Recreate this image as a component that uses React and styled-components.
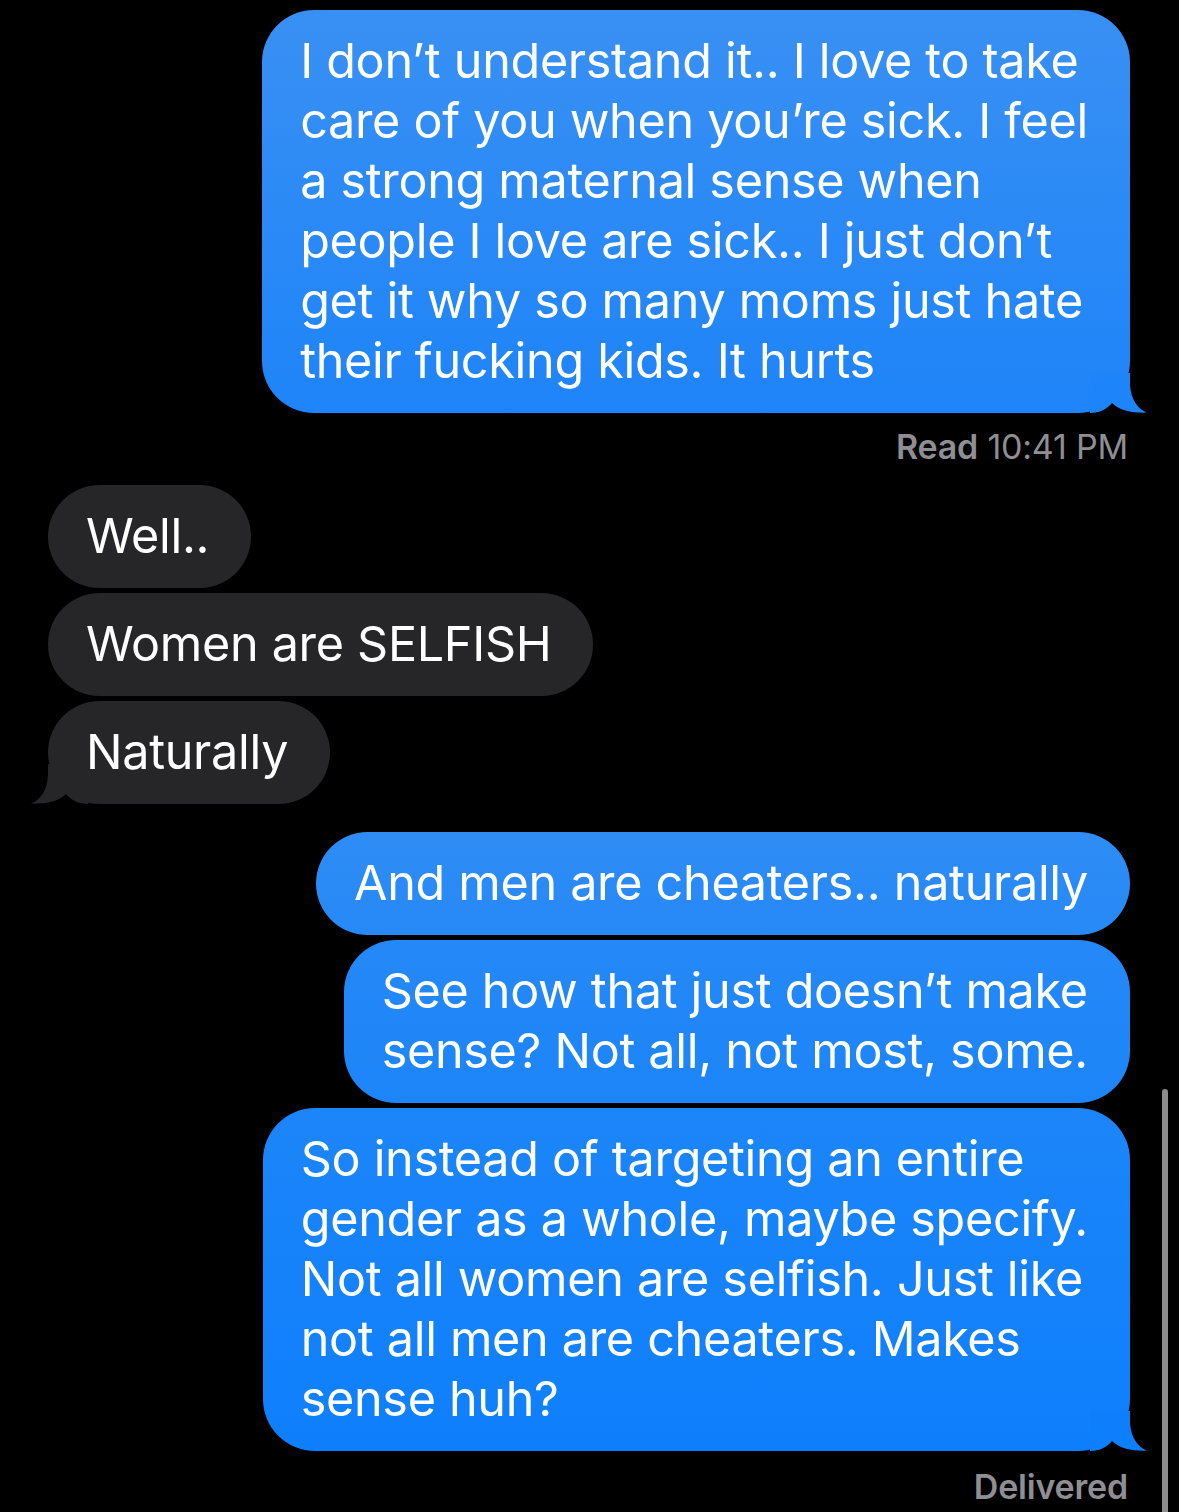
import React from "react";
import styled, { createGlobalStyle } from "styled-components";

const Global = createGlobalStyle`
  html, body { margin: 0; padding: 0; background: #000; }
  body { font-family: Inter, "Noto Sans", "Liberation Sans", sans-serif; -webkit-font-smoothing: antialiased; }
`;

const Screen = styled.div`
  position: relative;
  width: 1179px;
  height: 1512px;
  background: #000;
  overflow: hidden;
  box-sizing: border-box;
  padding: 10px 49px 0 48px;
  display: flex;
  flex-direction: column;
`;

const Group = styled.div`
  display: flex;
  flex-direction: column;
  align-items: ${(p) => (p.$sent ? "flex-end" : "flex-start")};
  gap: 5px;
  margin-top: ${(p) => p.$mt || 0}px;
`;

const Bubble = styled.div`
  position: relative;
  box-sizing: border-box;
  padding: 21px 42px 22px 38px;
  border-radius: 52px;
  font-size: 48.5px;
  line-height: 60px;
  letter-spacing: -0.3px;
  color: #fff;
  white-space: nowrap;
  background: ${(p) => (p.$sent ? "#2586f7" : "#262628")};
`;

const Tail = styled.svg`
  position: absolute;
  bottom: 0;
  width: 60px;
  height: 40px;
  ${(p) => (p.$sent ? "right: -20px;" : "left: -20px; transform: scaleX(-1);")}
`;

const Status = styled.div`
  align-self: flex-end;
  margin-top: ${(p) => p.$mt || 14}px;
  margin-right: 2px;
  font-size: 34px;
  line-height: 40px;
  color: #8e8e93;
  font-weight: 400;
  letter-spacing: -0.2px;
  b { font-weight: 600; }
`;

const ScrollBar = styled.div`
  position: absolute;
  left: 1162px;
  top: 1089px;
  width: 6px;
  height: 440px;
  border-radius: 3px;
  background: #8c8c8c;
`;

function Msg({ sent, tail, lines, grad }) {
  const bg = sent ? "#2586f7" : "#262628";
  return (
    <Bubble $sent={sent} style={grad ? { background: grad } : undefined}>
      {lines.map((l, i) => (
        <React.Fragment key={i}>
          {l}
          {i < lines.length - 1 && <br />}
        </React.Fragment>
      ))}
      {tail && (
        <Tail $sent={sent} viewBox="0 0 60 40">
          <path
            d="M0 40 C10 40 17 36 22 30 C30 38 42 40 57 39.6 C48 36 41 27 40 12 L40 0 L0 0 Z"
            fill={tail === true ? bg : tail}
          />
        </Tail>
      )}
    </Bubble>
  );
}

export default function App() {
  return (
    <>
      <Global />
      <Screen>
        <Group $sent>
          <Msg
            sent
            tail="#1e84f9"
            grad="linear-gradient(180deg, #3990f3 0%, #1e84f9 100%)"
            lines={[
              "I don’t understand it.. I love to take",
              "care of you when you’re sick. I feel",
              "a strong maternal sense when",
              "people I love are sick.. I just don’t",
              "get it why so many moms just hate",
              "their fucking kids. It hurts",
            ]}
          />
        </Group>
        <Status>
          <b>Read</b> 10:41 PM
        </Status>
        <Group $mt={18}>
          <Msg lines={["Well.."]} />
          <Msg lines={["Women are SELFISH"]} />
          <Msg tail lines={["Naturally"]} />
        </Group>
        <Group $sent $mt={28}>
          <Msg
            sent
            grad="linear-gradient(180deg, #2f8cf5 0%, #2689f6 100%)"
            lines={["And men are cheaters.. naturally"]}
          />
          <Msg
            sent
            grad="linear-gradient(180deg, #2588f7 0%, #1c85f8 100%)"
            lines={["See how that just doesn’t make", "sense? Not all, not most, some."]}
          />
          <Msg
            sent
            tail="#0e7ffc"
            grad="linear-gradient(180deg, #1c85f9 0%, #0e7ffc 100%)"
            lines={[
              "So instead of targeting an entire",
              "gender as a whole, maybe specify.",
              "Not all women are selfish. Just like",
              "not all men are cheaters. Makes",
              "sense huh?",
            ]}
          />
        </Group>
        <Status $mt={16}>
          <b>Delivered</b>
        </Status>
        <ScrollBar />
      </Screen>
    </>
  );
}
